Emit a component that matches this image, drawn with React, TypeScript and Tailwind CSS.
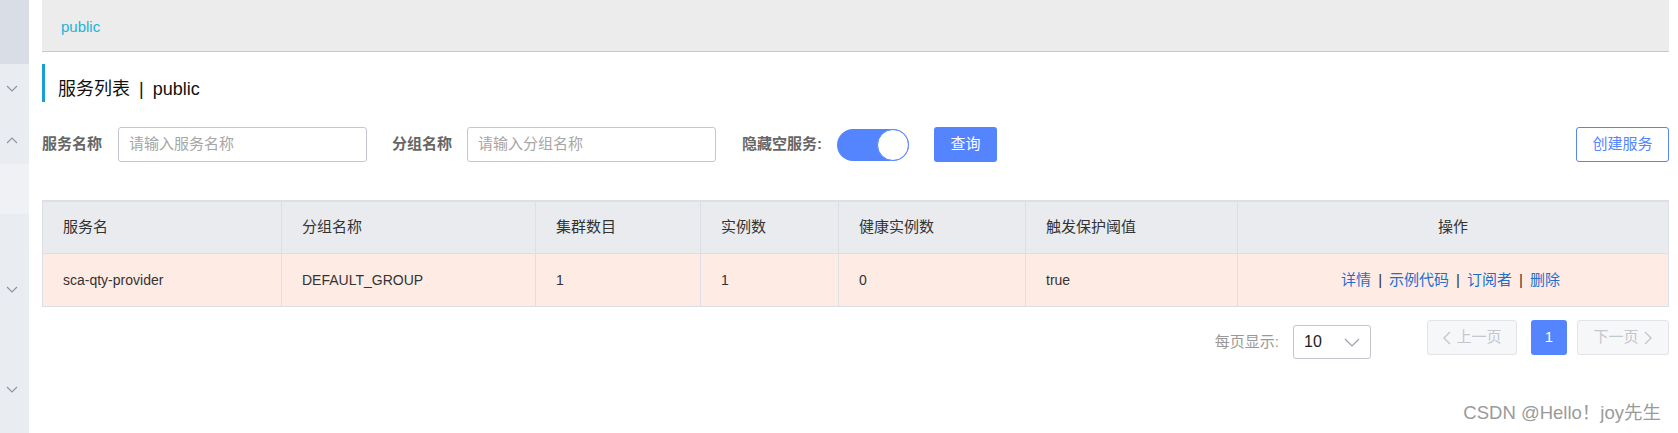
import React from "react";

const font = { fontFamily: '"Liberation Sans", "Noto Sans CJK SC", sans-serif' };

function Chevron({ up = false }: { up?: boolean }) {
  return (
    <svg width="12" height="7" viewBox="0 0 12 7" className="block">
      <path
        d={up ? "M1 6 L6 1 L11 6" : "M1 1 L6 6 L11 1"}
        fill="none"
        stroke="#8e939c"
        strokeWidth="1.1"
      />
    </svg>
  );
}

const cols = [
  { label: "服务名", w: "w-[239px]" },
  { label: "分组名称", w: "w-[254px]" },
  { label: "集群数目", w: "w-[165px]" },
  { label: "实例数", w: "w-[138px]" },
  { label: "健康实例数", w: "w-[187px]" },
  { label: "触发保护阈值", w: "w-[212px]" },
];
const row = ["sca-qty-provider", "DEFAULT_GROUP", "1", "1", "0", "true"];

export default function App() {
  return (
    <div
      className="relative flex w-[1678px] h-[433px] bg-white overflow-hidden text-[#333]"
      style={font}
    >
      {/* sidebar */}
      <div className="w-[29px] flex flex-col shrink-0">
        <div className="h-[64px] bg-[#d9dee6]" />
        <div className="h-[100px] bg-[#e9ecf1] flex flex-col items-center">
          <div className="mt-[21px] -ml-[5px]"><Chevron /></div>
          <div className="mt-[45px] -ml-[5px]"><Chevron up /></div>
        </div>
        <div className="h-[50px] bg-[#eff1f5]" />
        <div className="flex-1 bg-[#e9ecf1] flex flex-col items-center">
          <div className="mt-[72px] -ml-[5px]"><Chevron /></div>
          <div className="mt-[93px] -ml-[5px]"><Chevron /></div>
        </div>
      </div>

      {/* main */}
      <div className="ml-[13px] w-[1627px] flex flex-col">
        <div className="h-[52px] bg-[#ececec] border-b border-[#c9c9c9] flex items-center pl-[19px] pt-[4px]">
          <span className="text-[15px] text-[#21b3d9]">public</span>
        </div>

        <div className="mt-[12px] h-[38px] border-l-[3px] border-[#1a9ed8] flex items-center pl-[13px] pt-[13px] text-[18px] text-[#111]">
          <span>服务列表</span>
          <span className="mx-[9px]">|</span>
          <span>public</span>
        </div>

        <div className="mt-[25px] h-[35px] flex items-center text-[15px]">
          <span className="font-bold text-[#666] w-[76px]">服务名称</span>
          <div className="w-[249px] h-[35px] border border-[#c4c6cf] rounded-[3px] flex items-center pl-[10px] text-[#a6a6a6]">
            请输入服务名称
          </div>
          <span className="ml-[25px] font-bold text-[#666] w-[75px]">分组名称</span>
          <div className="w-[249px] h-[35px] border border-[#c4c6cf] rounded-[3px] flex items-center pl-[10px] text-[#a6a6a6]">
            请输入分组名称
          </div>
          <span className="ml-[26px] font-bold text-[#666] w-[95px]">隐藏空服务:</span>
          <div className="w-[72px] h-[32px] rounded-full bg-[#5584ff] flex justify-end">
            <div className="w-[32px] h-[32px] rounded-full bg-white border border-[#5584ff]" />
          </div>
          <div className="ml-[25px] w-[63px] h-[35px] rounded-[3px] bg-[#5584ff] text-white flex items-center justify-center">
            查询
          </div>
          <div className="ml-auto w-[93px] h-[35px] rounded-[3px] border border-[#5584ff] text-[#5584ff] flex items-center justify-center">
            创建服务
          </div>
        </div>

        {/* table */}
        <div className="mt-[38px] border border-t-2 border-[#dcdfe6] text-[15px]">
          <div className="flex h-[52px] bg-[#e9ebef] border-b border-[#dcdfe6]">
            {cols.map((c) => (
              <div key={c.label} className={`${c.w} shrink-0 border-r border-[#dcdfe6] flex items-center pl-[20px] text-[#333]`}>
                {c.label}
              </div>
            ))}
            <div className="flex-1 flex items-center justify-center text-[#333]">操作</div>
          </div>
          <div className="flex h-[52px] bg-[#feebe4] text-[14px]">
            {cols.map((c, i) => (
              <div key={c.label} className={`${c.w} shrink-0 border-r border-[#dcdfe6] flex items-center pl-[20px] text-[#333]`}>
                {row[i]}
              </div>
            ))}
            <div className="flex-1 flex items-center justify-center text-[15px] pr-[5px]">
              <span className="text-[#1e6fcc]">详情</span>
              <span className="mx-[7px] text-[#333]">|</span>
              <span className="text-[#1e6fcc]">示例代码</span>
              <span className="mx-[7px] text-[#333]">|</span>
              <span className="text-[#1e6fcc]">订阅者</span>
              <span className="mx-[7px] text-[#333]">|</span>
              <span className="text-[#1e6fcc]">删除</span>
            </div>
          </div>
        </div>

        {/* pagination */}
        <div className="mt-[13px] flex justify-end items-start text-[15px]">
          <div className="mt-[5px] h-[34px] flex items-center">
            <span className="text-[#999] mr-[14px]">每页显示:</span>
            <div className="w-[78px] h-[34px] border border-[#c4c6cf] rounded-[3px] flex items-center justify-between pl-[10px] pr-[10px]">
              <span className="text-[16px] text-[#222]">10</span>
              <svg width="16" height="9" viewBox="0 0 16 9">
                <path d="M1 1 L8 8 L15 1" fill="none" stroke="#9aa0a8" strokeWidth="1.2" />
              </svg>
            </div>
          </div>
          <div className="ml-[56px] w-[90px] h-[35px] rounded-[3px] border border-[#e2e4e8] bg-[#f6f7f9] flex items-center justify-center text-[#c3c6cc]">
            <svg width="9" height="14" viewBox="0 0 9 14" className="mr-[5px]">
              <path d="M8 1 L2 7 L8 13" fill="none" stroke="#c3c6cc" strokeWidth="1.4" />
            </svg>
            上一页
          </div>
          <div className="ml-[14px] w-[36px] h-[35px] rounded-[3px] bg-[#5584ff] text-white flex items-center justify-center">
            1
          </div>
          <div className="ml-[10px] w-[92px] h-[35px] rounded-[3px] border border-[#e2e4e8] bg-[#f6f7f9] flex items-center justify-center text-[#c3c6cc]">
            下一页
            <svg width="9" height="14" viewBox="0 0 9 14" className="ml-[5px]">
              <path d="M1 1 L7 7 L1 13" fill="none" stroke="#c3c6cc" strokeWidth="1.4" />
            </svg>
          </div>
        </div>
      </div>

      <div className="absolute right-[17px] top-[400px] text-[18.5px] text-[#9a9a9a] leading-[26px]">
        CSDN @Hello！joy先生
      </div>
    </div>
  );
}
